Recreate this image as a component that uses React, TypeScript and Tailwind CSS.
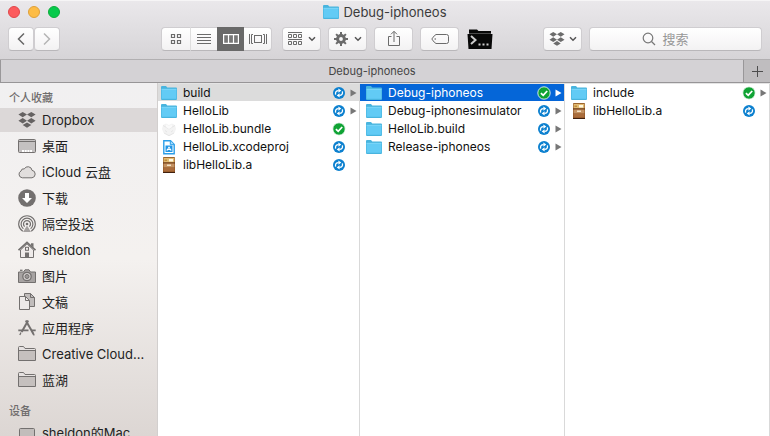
import type { ReactNode } from "react";

type IconProps = { className?: string };

const buttonBase =
  "flex h-6 items-center justify-center rounded border border-[#cfcdd0] border-b-[#b9b7ba] bg-linear-to-b from-white to-[#f3f2f3] text-[#6b6b6b]";

function FolderIcon({ className = "" }: IconProps) {
  return (
    <svg viewBox="0 0 16 14" className={`h-3.5 w-4 shrink-0 ${className}`} aria-hidden="true">
      <path d="M0 1Q0 0 1 0H5L6.3 1.5H15Q16 1.5 16 2.5V13Q16 14 15 14H1Q0 14 0 13Z" fill="#48b4de" />
      <path d="M0.6 3H15.4V12.8H0.6Z" fill="#62cbf5" />
      <path d="M0.6 3.3H15.4" stroke="#84d9fa" strokeWidth="0.8" />
    </svg>
  );
}

function BundleIcon() {
  return (
    <svg viewBox="0 0 16 16" className="size-4 shrink-0" aria-hidden="true">
      <path d="M2 4L5 2.5L8 4L11 2.5L14 4L15 8L13.5 12L8 15L2.5 12L1 8Z" fill="#f3f3f3" />
      <path d="M2 4.5L8 8L14 4.5M4 9.5L6 11M10 11L12 9.5M3 12L8 14.7L13 12" stroke="#e6e6e6" fill="none" />
      <path d="M5 3.5L8 5L11 3.5V6L8 8L5 6Z" fill="#fafafa" />
    </svg>
  );
}

function ProjectIcon() {
  return (
    <svg viewBox="0 0 16 16" className="size-4 shrink-0" aria-hidden="true">
      <path d="M2.8 1.8H9.5L13.2 5.5V14.7H2.8Z" fill="#fff" stroke="#2b9ee8" strokeWidth="1.4" />
      <path d="M9.3 1.8V5.7H13.2" fill="#a8dcfb" stroke="#2b9ee8" />
      <path d="M4.5 6.5H11.5V13H4.5Z" fill="#2196e6" />
      <path d="M6 11.8L8 7.8L10 11.8M5.8 10.5H10.2" stroke="#fff" fill="none" />
    </svg>
  );
}

function ArchiveIcon() {
  return (
    <svg viewBox="0 0 16 16" className="size-4 shrink-0" aria-hidden="true">
      <path d="M2 1Q2 0 3 0H13Q14 0 14 1V16H2Z" fill="#8b501f" />
      <path d="M2.5 0.8H13.5V5.5H2.5Z" fill="#e2bb73" />
      <path d="M8 2H12V4.5H8Z" fill="#fff7df" />
      <path d="M3.5 2.5H6V4H3.5Z" fill="#c08f3c" />
      <path d="M2 5.5H14V6.5H2Z" fill="#5d2e12" />
      <path d="M2.5 6.5H13.5V10.5H2.5Z" fill="#c49262" />
      <path d="M6 7.5H10V9H6Z" fill="#f3e2c6" />
      <path d="M2.5 11H13.5V14.5H2.5Z" fill="#aa6c3c" />
      <path d="M2 15H14V16H2Z" fill="#40200e" />
    </svg>
  );
}

function SyncedIcon() {
  return (
    <svg viewBox="0 0 14 14" className="size-3.5 shrink-0" role="img" aria-label="已同步">
      <circle cx="7" cy="7" r="6.2" fill="#0fa334" stroke="#fff" strokeWidth="0.8" />
      <path d="M3.9 7.2L6.2 9.3L10.2 5" stroke="#fff" strokeWidth="1.8" fill="none" />
    </svg>
  );
}

function SyncingIcon() {
  return (
    <svg viewBox="0 0 14 14" className="size-3.5 shrink-0" role="img" aria-label="正在同步">
      <circle cx="7" cy="7" r="6" fill="#0c80cf" />
      <path d="M3.6 8.6Q2.9 4.7 6.6 4.6" stroke="#fff" strokeWidth="1.3" fill="none" />
      <path d="M10.4 5.4Q11.1 9.3 7.4 9.4" stroke="#fff" strokeWidth="1.3" fill="none" />
      <path d="M6.3 2.5L9.3 4.4L6.5 6.7ZM7.7 11.5L4.7 9.6L7.5 7.3Z" fill="#fff" />
    </svg>
  );
}

function DropboxIcon({ className = "" }: IconProps) {
  return (
    <svg viewBox="0 0 18 16" className={className} fill="currentColor" aria-hidden="true">
      <path d="M4.7 0L9 2.6L4.7 5.3L0.4 2.6ZM13.3 0L17.6 2.6L13.3 5.3L9 2.6ZM4.7 6.1L9 8.8L4.7 11.5L0.4 8.8ZM13.3 6.1L17.6 8.8L13.3 11.5L9 8.8ZM9 10.4L13.3 13.1L9 15.8L4.7 13.1Z" />
    </svg>
  );
}

function ChevronDown() {
  return (
    <svg viewBox="0 0 8 6" className="h-1.5 w-2 shrink-0" aria-hidden="true">
      <path d="M1 1.2L4 4.2L7 1.2" fill="none" stroke="#555" strokeWidth="1.5" />
    </svg>
  );
}

function SideIcon({ children }: { children: ReactNode }) {
  return (
    <svg
      viewBox="0 0 18 18"
      className="size-[18px] shrink-0 text-[#73706f]"
      fill="none"
      stroke="currentColor"
      aria-hidden="true"
    >
      {children}
    </svg>
  );
}

const sideFolder = (
  <SideIcon>
    <path d="M0.5 15.5V2.5Q0.5 1.5 1.5 1.5H5.5L7 3.5H16.5Q17.5 3.5 17.5 4.5V15.5Z" fill="#e6e2e1" />
    <path d="M1 6H17V15H1Z" fill="#c5c0be" stroke="none" />
    <path d="M0.5 5.5H17.5" />
  </SideIcon>
);

const favourites: { name: string; icon: ReactNode; selected?: boolean }[] = [
  {
    name: "Dropbox",
    selected: true,
    icon: <DropboxIcon className="h-4 w-[18px] shrink-0 text-[#656262]" />,
  },
  {
    name: "桌面",
    icon: (
      <SideIcon>
        <rect x="0.5" y="2.5" width="17" height="13" rx="1" fill="#c4c1c1" />
        <path d="M1 4.5H17" />
        <path d="M4 14H14" stroke="#fff" strokeWidth="2" strokeDasharray="2 0.7" />
      </SideIcon>
    ),
  },
  {
    name: "iCloud 云盘",
    icon: (
      <SideIcon>
        <path
          d="M4.3 14.8A3.6 3.6 0 0 1 3 8A2.7 2.7 0 0 1 6.3 5.9A4.1 4.1 0 0 1 14 7.3A3.8 3.8 0 0 1 14 14.8Z"
          fill="#e1dedd"
        />
      </SideIcon>
    ),
  },
  {
    name: "下载",
    icon: (
      <SideIcon>
        <circle cx="9" cy="9" r="8.8" fill="#73706f" stroke="none" />
        <path d="M7 4H11V9H14L9 14L4 9H7Z" fill="#fff" stroke="none" />
      </SideIcon>
    ),
  },
  {
    name: "隔空投送",
    icon: (
      <SideIcon>
        <path d="M4.8 16.2A8.3 8.3 0 1 1 13.2 16.2" strokeWidth="1.2" />
        <path d="M5.4 13.7A5.9 5.9 0 1 1 12.6 13.7" strokeWidth="1.2" />
        <path d="M6.6 11.6A3.5 3.5 0 1 1 11.4 11.6" strokeWidth="1.2" />
        <circle cx="9" cy="9" r="1.3" fill="currentColor" stroke="none" />
        <path d="M9 10.5L13 17H5Z" fill="#a5a1a0" stroke="none" />
      </SideIcon>
    ),
  },
  {
    name: "sheldon",
    icon: (
      <SideIcon>
        <path d="M2.5 9V16.5H15.5V9L9 2.8Z" fill="#efebea" />
        <path d="M0.5 9.2L9 1.4L17.5 9.2" strokeWidth="1.8" />
        <path d="M13 2.2H15.5V6.5L13 4.2Z" fill="currentColor" stroke="none" />
        <rect x="7.5" y="6.3" width="3" height="3" />
        <path d="M7 11.5H11V16.5H7Z" fill="currentColor" stroke="none" />
      </SideIcon>
    ),
  },
  {
    name: "图片",
    icon: (
      <SideIcon>
        <path d="M2 3.3H4.5" strokeWidth="1.3" />
        <path d="M0.5 5H5.5L7 2.8H11L12.5 5H17.5V15.5H0.5Z" fill="#a7a3a2" />
        <circle cx="9" cy="9.5" r="4.2" fill="#d3cfce" strokeWidth="1.3" />
        <circle cx="9" cy="9.5" r="2" fill="#9b9796" />
      </SideIcon>
    ),
  },
  {
    name: "文稿",
    icon: (
      <SideIcon>
        <path d="M6.5 0.5H12.5L16.5 4.5V13.5H6.5Z" fill="#c0bcbb" />
        <path d="M12.5 0.5V4.5H16.5" />
        <path d="M1.5 3.5H7.5L11.5 7.5V16.5H1.5Z" fill="#edeae9" />
        <path d="M7.5 3.5V7.5H11.5" />
      </SideIcon>
    ),
  },
  {
    name: "应用程序",
    icon: (
      <SideIcon>
        <path d="M10.2 1.5L3.6 13" strokeWidth="2" />
        <path d="M7.8 1.5L15.5 15" strokeWidth="2" />
        <path d="M0.3 11.3H10.5M13.7 11.3H17.7" strokeWidth="1.8" />
        <path d="M3 13.5L1.8 16M15 14.5L16.3 16.3" strokeWidth="1.3" />
      </SideIcon>
    ),
  },
  { name: "Creative Cloud...", icon: sideFolder },
  { name: "蓝湖", icon: sideFolder },
];

const devices: { name: string; icon: ReactNode; selected?: boolean }[] = [
  {
    name: "sheldon的Mac",
    icon: (
      <SideIcon>
        <rect x="1.5" y="4.5" width="15" height="10" rx="1" fill="#c2bdbb" />
        <path d="M0 16.5H18" />
      </SideIcon>
    ),
  },
];

function SideSection({ title, items }: { title: string; items: typeof favourites }) {
  return (
    <section className="mb-1">
      <h2 className="flex h-[25px] items-center pt-1 pl-[9px] text-[11px] font-medium text-[#6f6c6c]">
        {title}
      </h2>
      <ul className="flex flex-col gap-0.5">
        {items.map((item) => (
          <li key={item.name}>
            <a
              href="#"
              className={`flex h-6 items-center gap-1.5 pl-[18px] whitespace-nowrap ${item.selected ? "bg-[#dcd8d8]" : ""}`}
            >
              {item.icon}
              {item.name}
            </a>
          </li>
        ))}
      </ul>
    </section>
  );
}

type Entry = {
  name: string;
  kind: "folder" | "bundle" | "project" | "archive";
  synced?: boolean;
  state?: "open" | "active";
};

const columns: Entry[][] = [
  [
    { name: "build", kind: "folder", state: "open" },
    { name: "HelloLib", kind: "folder" },
    { name: "HelloLib.bundle", kind: "bundle", synced: true },
    { name: "HelloLib.xcodeproj", kind: "project" },
    { name: "libHelloLib.a", kind: "archive" },
  ],
  [
    { name: "Debug-iphoneos", kind: "folder", synced: true, state: "active" },
    { name: "Debug-iphonesimulator", kind: "folder" },
    { name: "HelloLib.build", kind: "folder" },
    { name: "Release-iphoneos", kind: "folder" },
  ],
  [
    { name: "include", kind: "folder", synced: true },
    { name: "libHelloLib.a", kind: "archive" },
  ],
];

const kindIcons = {
  folder: <FolderIcon />,
  bundle: <BundleIcon />,
  project: <ProjectIcon />,
  archive: <ArchiveIcon />,
};

function EntryRow({ entry, first }: { entry: Entry; first: boolean }) {
  const tone =
    entry.state === "active"
      ? "bg-[#0566d8] text-white"
      : entry.state === "open"
        ? "bg-[#dcdcdc]"
        : "";
  return (
    <li>
      <a href="#" className={`flex h-[17px] items-center pr-0.5 ${first ? "pl-[3px]" : "pl-1.5"} ${tone}`}>
        {kindIcons[entry.kind]}
        <span className="ml-1.5 flex-1 whitespace-nowrap">{entry.name}</span>
        {entry.synced ? <SyncedIcon /> : <SyncingIcon />}
        <svg viewBox="0 0 7 8" className="ml-1 h-2 w-[7px] shrink-0" aria-hidden="true">
          {entry.kind === "folder" && (
            <path d="M0.5 0.5L6.5 4L0.5 7.5Z" fill={entry.state === "active" ? "#fff" : "#777"} />
          )}
        </svg>
      </a>
    </li>
  );
}

function Toolbar() {
  return (
    <div className="flex items-center px-2">
      <div className="flex">
        <button aria-label="后退" className={`${buttonBase} w-[26px]`}>
          <svg viewBox="0 0 8 14" className="h-3.5 w-2" fill="none" stroke="#666" strokeWidth="1.5">
            <path d="M7 1.5L1.5 7L7 12.5" />
          </svg>
        </button>
        <button aria-label="前进" className={`${buttonBase} w-[26px]`}>
          <svg viewBox="0 0 8 14" className="h-3.5 w-2" fill="none" stroke="#b5b5b5" strokeWidth="1.5">
            <path d="M1 1.5L6.5 7L1 12.5" />
          </svg>
        </button>
      </div>

      <div className="ml-[101px] flex" role="group" aria-label="显示">
        <button aria-label="图标" className={`${buttonBase} w-[30px] rounded-r-none border-r-[#dedede]`}>
          <svg viewBox="0 0 12 12" className="size-3" fill="none" stroke="currentColor" strokeWidth="1.2">
            <path d="M1.5 1.5H4.5V4.5H1.5ZM7.5 1.5H10.5V4.5H7.5ZM1.5 7.5H4.5V10.5H1.5ZM7.5 7.5H10.5V10.5H7.5Z" />
          </svg>
        </button>
        <button aria-label="列表" className={`${buttonBase} w-[26px] rounded-none border-x-0`}>
          <svg viewBox="0 0 14 12" className="h-3 w-3.5" stroke="currentColor">
            <path d="M0 1.5H14M0 4.5H14M0 7.5H14M0 10.5H14" />
          </svg>
        </button>
        <button
          aria-label="分栏"
          aria-pressed="true"
          className="flex h-6 w-[27px] items-center justify-center bg-[#696969] text-white"
        >
          <svg viewBox="0 0 16 10" className="h-2.5 w-4" fill="#777" stroke="currentColor" strokeWidth="1.2">
            <path d="M0.6 0.6H15.4V9.4H0.6ZM5.5 0.6V9.4M10.5 0.6V9.4" />
          </svg>
        </button>
        <button aria-label="封面流" className={`${buttonBase} w-7 rounded-l-none border-l-0`}>
          <svg viewBox="0 0 18 12" className="h-3 w-[18px]" fill="none" stroke="currentColor">
            <path d="M0.5 1V11M17.5 1V11M4 1.5H2.5V10.5H4M14 1.5H15.5V10.5H14" />
            <rect x="5.5" y="2.5" width="7" height="7" />
          </svg>
        </button>
      </div>

      <button aria-label="排列" className={`${buttonBase} ml-2.5 w-[39px] gap-1.5`}>
        <svg viewBox="0 0 14 14" className="h-3.5 w-3.5" fill="none" stroke="currentColor">
          <path d="M0 0.5H14M0 7.5H14M0.5 2.5H3.5V5.5H0.5ZM5.5 2.5H8.5V5.5H5.5ZM10.5 2.5H13.5V5.5H10.5ZM0.5 9.5H3.5V12.5H0.5ZM5.5 9.5H8.5V12.5H5.5ZM10.5 9.5H13.5V12.5H10.5Z" />
        </svg>
        <ChevronDown />
      </button>
      <button aria-label="操作" className={`${buttonBase} ml-[7px] w-[39px] gap-1.5`}>
        <svg viewBox="0 0 14 14" className="size-3.5" fill="none" stroke="currentColor">
          <circle cx="7" cy="7" r="3.4" strokeWidth="3" />
          <path
            d="M7 0V3M7 11V14M0 7H3M11 7H14M2.1 2.1L4.2 4.2M9.8 9.8L11.9 11.9M2.1 11.9L4.2 9.8M9.8 4.2L11.9 2.1"
            strokeWidth="2"
          />
        </svg>
        <ChevronDown />
      </button>
      <button aria-label="共享" className={`${buttonBase} ml-[7px] w-[39px]`}>
        <svg viewBox="0 0 12 16" className="mb-0.5 h-4 w-3" fill="none" stroke="currentColor">
          <path d="M3.5 6.5H0.5V15.5H11.5V6.5H8.5M6 12V1.5M3 4.3L6 1.3L9 4.3" />
        </svg>
      </button>
      <button aria-label="编辑标记" className={`${buttonBase} ml-[7px] w-[39px]`}>
        <svg viewBox="0 0 18 12" className="h-3 w-[18px]" fill="none" stroke="currentColor">
          <path d="M5 1.5H15.5Q17.5 1.5 17.5 3.5V8.5Q17.5 10.5 15.5 10.5H5Q3.5 10 0.8 6Q3.5 2 5 1.5Z" />
          <circle cx="4.2" cy="6" r="0.8" fill="currentColor" stroke="none" />
        </svg>
      </button>
      <button aria-label="终端" className="ml-2 flex h-6 items-center">
        <svg viewBox="0 0 26 20" className="h-5 w-[26px]" fill="none">
          <path d="M2 2V0.5H10L11.5 2H24V5H25.5L24.5 20H1.5L0.5 5H2Z" fill="#080808" />
          <path d="M2 4.5H24" stroke="#4a4a4a" />
          <path d="M4 7L8.5 11L4 15" stroke="#ccc" strokeWidth="2" />
          <path d="M11.5 15.5H21.5" stroke="#ccc" strokeWidth="2" strokeDasharray="2 2" />
        </svg>
      </button>

      <button aria-label="Dropbox" className={`${buttonBase} ml-auto w-[39px] gap-1`}>
        <DropboxIcon className="h-3.5 w-4" />
        <ChevronDown />
      </button>
      <label className={`${buttonBase} ml-[7px] w-[173px] cursor-text gap-1.5 pr-5`}>
        <svg viewBox="0 0 14 14" className="size-3.5" fill="none" stroke="#777" strokeWidth="1.2">
          <circle cx="6" cy="6" r="4.8" />
          <path d="M9.5 9.5L13 13" />
        </svg>
        <input
          type="text"
          aria-label="搜索"
          placeholder="搜索"
          className="field-sizing-content bg-transparent leading-5 outline-none placeholder:text-[#979797]"
        />
      </label>
    </div>
  );
}

export default function App() {
  return (
    <div className="flex h-screen flex-col overflow-hidden bg-white font-[Inter,'Noto_Sans_CJK_SC',sans-serif] text-[13px] leading-[18px] text-[#222]">
      <header className="flex h-[59px] shrink-0 flex-col gap-1 border-t border-[#f6f5f6] bg-linear-to-b from-[#eae8eb] to-[#d6d4d7]">
        <div className="grid h-[22px] shrink-0 grid-cols-[1fr_auto_1fr] items-center px-2">
          <div className="flex gap-2">
            <button aria-label="关闭" className="size-3 rounded-full border border-[#e0474a] bg-[#fc5b5d]" />
            <button aria-label="最小化" className="size-3 rounded-full border border-[#dfa03a] bg-[#fdbc45]" />
            <button aria-label="缩放" className="size-3 rounded-full border border-[#0cac3b] bg-[#06ca4b]" />
          </div>
          <h1 className="flex items-center gap-1 text-[#3b3b3b]">
            <FolderIcon />
            Debug-iphoneos
          </h1>
        </div>
        <Toolbar />
      </header>

      <div className="flex h-6 shrink-0 border-y border-t-[#b1afb1] border-b-[#979597] bg-[#d4d2d5] text-[11px] text-[#444]">
        <button className="flex-1 border-l border-[#999799]">Debug-iphoneos</button>
        <button
          aria-label="新建标签页"
          className="flex w-[27px] items-center justify-center border-l border-[#999799] bg-[#bfbdbf]"
        >
          <svg viewBox="0 0 11 11" className="size-[11px]" stroke="#4d4d4d">
            <path d="M5.5 0V11M0 5.5H11" />
          </svg>
        </button>
      </div>

      <div className="flex min-h-0 flex-1">
        <nav
          aria-label="边栏"
          className="w-[158px] shrink-0 overflow-hidden border-r border-[#d2cfce] bg-linear-to-b from-[#f1f0f1] via-[#f4f1ef] via-50% to-[#dcd6d3]"
        >
          <SideSection title="个人收藏" items={favourites} />
          <SideSection title="设备" items={devices} />
        </nav>
        <main className="grid min-w-0 flex-1 grid-cols-[202fr_205fr_205fr] border-t border-[#e4e4e4] text-xs text-[#111]">
          {columns.map((entries, index) => (
            <ul
              key={index}
              className="flex min-w-0 flex-col gap-px overflow-hidden border-r border-[#d9d9d9]"
            >
              {entries.map((entry) => (
                <EntryRow key={entry.name} entry={entry} first={index === 0} />
              ))}
            </ul>
          ))}
        </main>
      </div>
    </div>
  );
}
